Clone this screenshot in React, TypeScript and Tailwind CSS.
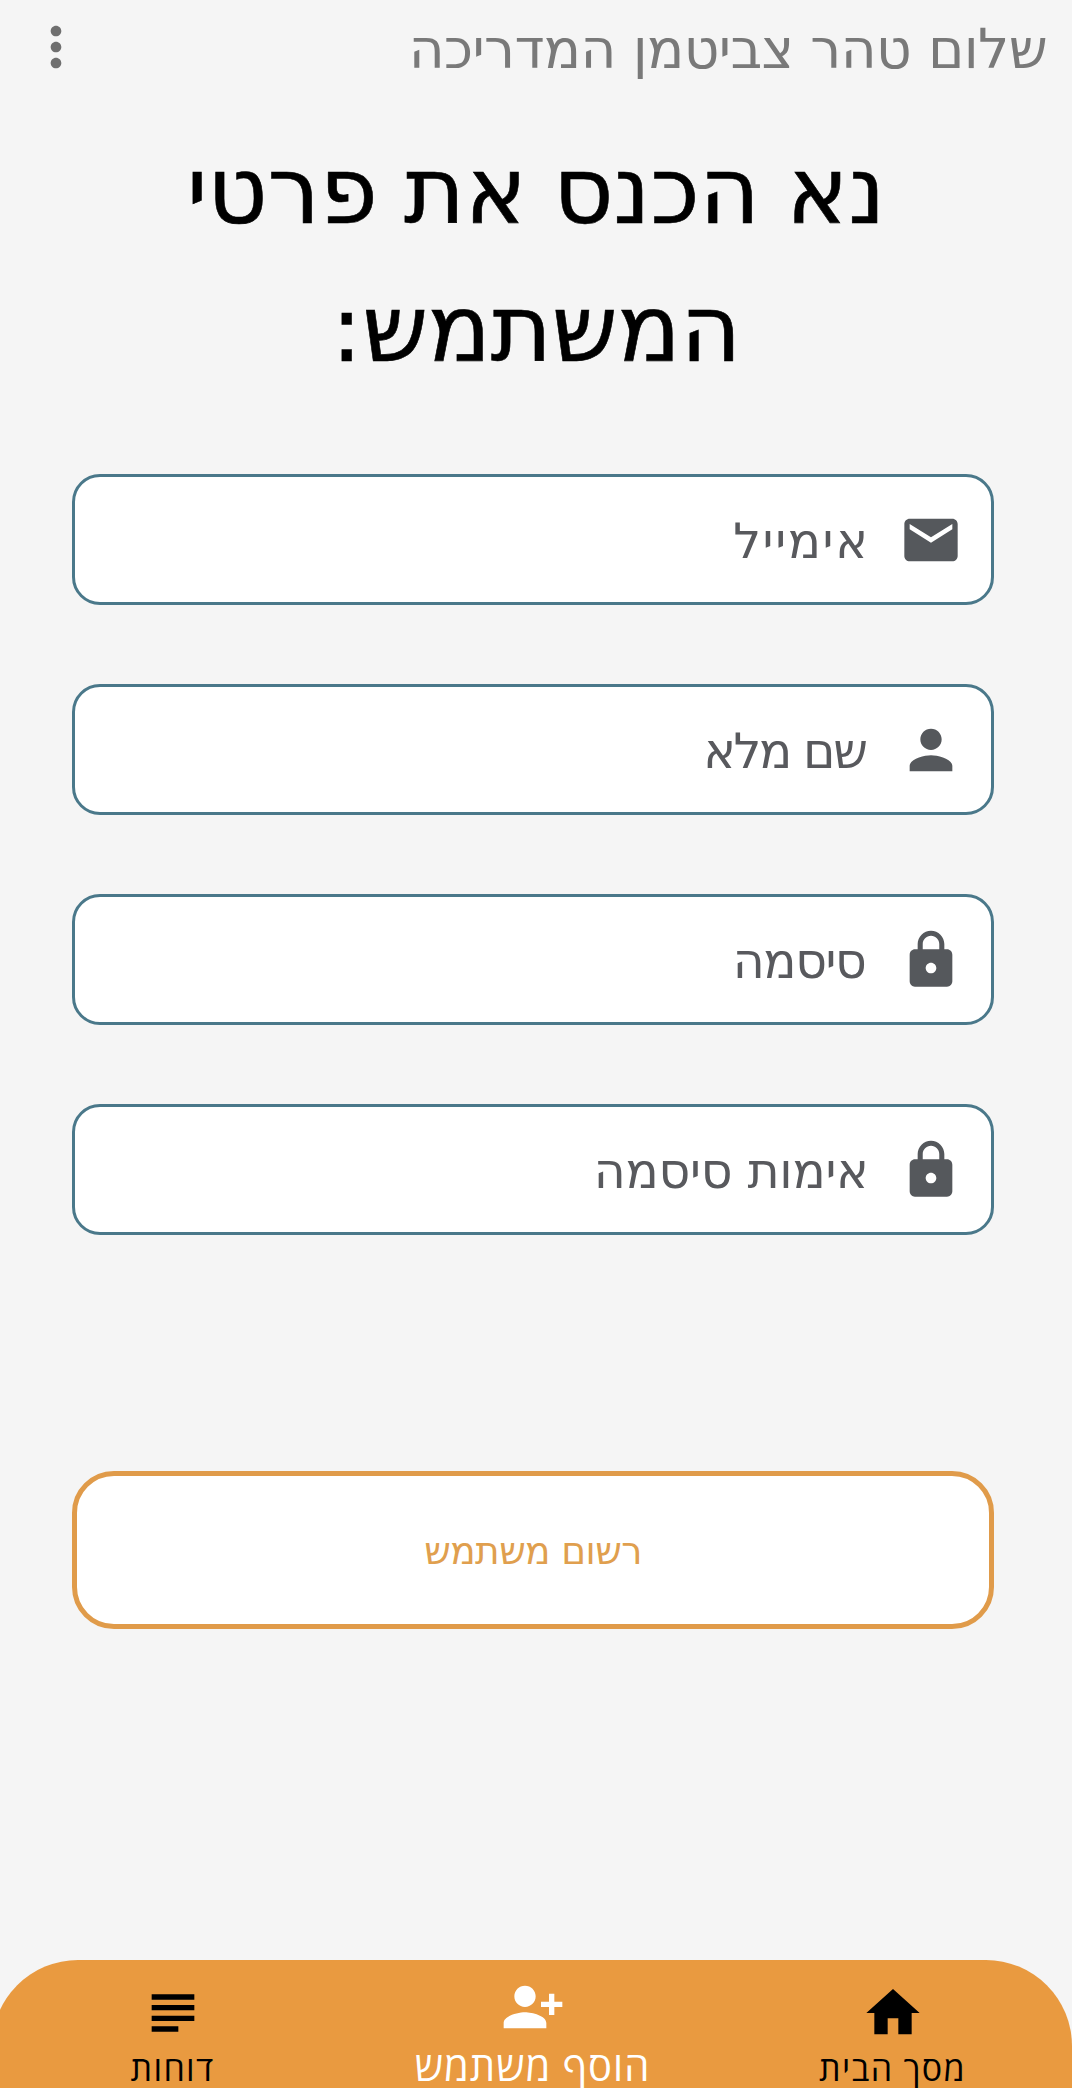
import { MdEmail, MdHome, MdLock, MdMoreVert, MdPerson, MdPersonAddAlt1, MdSubject } from "react-icons/md";

const fields = [
  { label: "אימייל", Icon: MdEmail, text: "tracking-[1.6px] -mr-[5px]" },
  { label: "שם מלא", Icon: MdPerson, text: "tracking-[-2.4px] -mr-px" },
  { label: "סיסמה", Icon: MdLock, text: "tracking-[-1.4px] -mr-px" },
  { label: "אימות סיסמה", Icon: MdLock, text: "tracking-[-0.3px] -mr-1" },
];

export default function App() {
  return (
    <div dir="rtl" className="flex h-[2088px] w-[1072px] flex-col overflow-hidden bg-[#f5f5f5] font-['DejaVu_Sans',sans-serif]">
      <header className="flex h-[93px] shrink-0 items-center justify-between pr-[25px] pl-6">
        <span className="pt-[5px] text-[55px] leading-[88px] tracking-[-0.65px] text-[#797979]">שלום טהר צביטמן המדריכה</span>
        <MdMoreVert className="size-16 text-[#6f6f6f]" />
      </header>
      <h1 className="mx-auto mt-[29px] w-[760px] text-center text-[93px] leading-[138px] tracking-[-0.2px] text-black [-webkit-text-stroke:0.6px_black] [word-spacing:-3px]">
        נא הכנס את פרטי המשתמש:
      </h1>
      <form className="mr-[78px] ml-[72px] mt-[76px] flex flex-col gap-[79px]">
        {fields.map(({ label, Icon, text }) => (
          <label key={label} className="flex h-[131px] items-center gap-[34px] rounded-[28px] border-[3px] border-[#4a788a] bg-white pr-[28.5px] text-[49px] text-[#58595d]">
            <Icon className="size-16 shrink-0 text-[#55585c]" />
            <span className={`pt-[4px] ${text}`}>{label}</span>
          </label>
        ))}
        <button type="button" className="mt-[157px] h-[158px] rounded-[42px] border-[5px] border-[#e09b4a] bg-white pt-[2px] text-[37.5px] tracking-[-0.6px] text-[#e09f4e]">
          רשום משתמש
        </button>
      </form>
      <nav className="mt-auto -ml-2 grid h-[128px] shrink-0 grid-cols-3 rounded-t-[86px] bg-[#e99a40] font-['Open_Sans',sans-serif]">
        <div className="flex flex-col items-center pt-[21px] pl-px text-[34px] leading-[40px] text-black">
          <MdHome className="size-16 shrink-0" />
          <span className="pt-[3px] tracking-[1.4px]">מסך הבית</span>
        </div>
        <div className="flex flex-col items-center pt-[15px] pl-px text-[40px] leading-[44px] text-white">
          <MdPersonAddAlt1 className="size-16 shrink-0" />
          <span className="mt-[5px] tracking-[1px]">הוסף משתמש</span>
        </div>
        <div className="flex flex-col items-center pt-[21px] pl-px text-[34px] leading-[40px] text-black">
          <MdSubject className="size-16 shrink-0" />
          <span className="pt-[3px] tracking-[1.3px]">דוחות</span>
        </div>
      </nav>
    </div>
  );
}
